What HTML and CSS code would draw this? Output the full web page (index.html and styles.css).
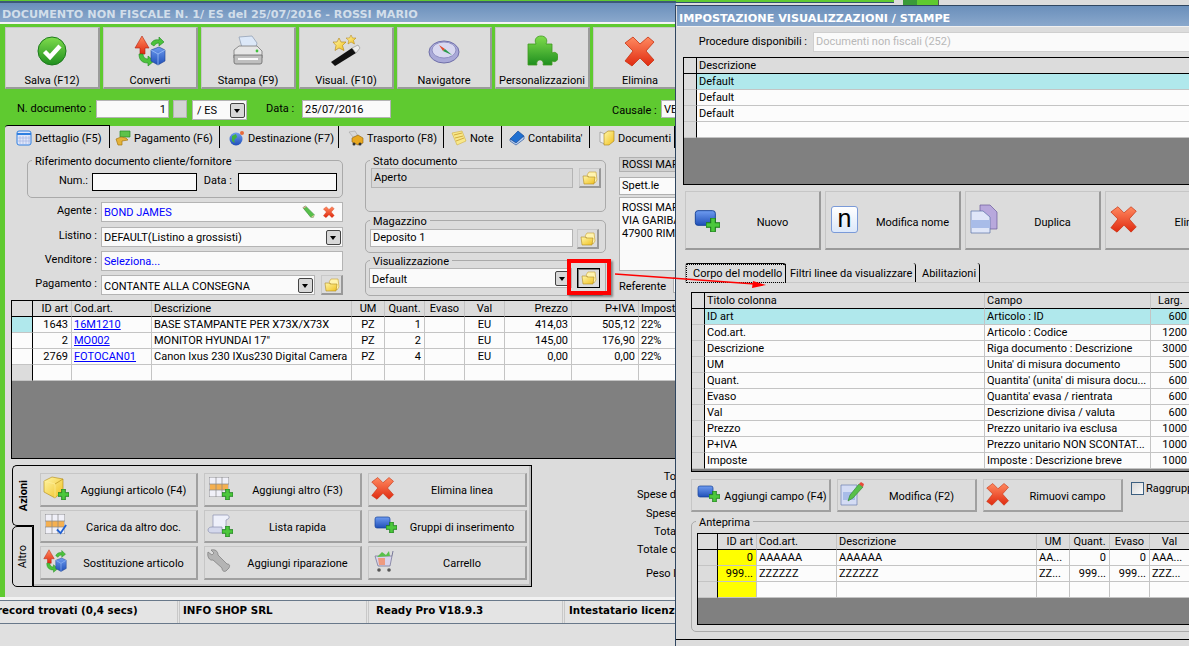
FILE: index.html
```html
<!DOCTYPE html>
<html lang="it">
<head>
<meta charset="utf-8">
<title>Documento non fiscale</title>
<link rel="stylesheet" href="styles.css">
</head>
<body>
<svg class="sprite" aria-hidden="true">
  <defs>
    <linearGradient id="gGreen" x1="0" y1="0" x2="0" y2="1"><stop offset="0" stop-color="#7fdc4c"/><stop offset="1" stop-color="#1f8f1f"/></linearGradient>
    <linearGradient id="gGold" x1="0" y1="0" x2="1" y2="1"><stop offset="0" stop-color="#fff6a8"/><stop offset="1" stop-color="#f0c020"/></linearGradient>
    <linearGradient id="gBlue" x1="0" y1="0" x2="0" y2="1"><stop offset="0" stop-color="#6f9cf0"/><stop offset="1" stop-color="#1f4fb8"/></linearGradient>
    <linearGradient id="gRed" x1="0" y1="0" x2="0" y2="1"><stop offset="0" stop-color="#ff8a60"/><stop offset="1" stop-color="#e02a10"/></linearGradient>
    <symbol id="i-check" viewBox="0 0 32 32"><circle cx="16" cy="16" r="14" fill="url(#gGreen)" stroke="#1c7a1c"/><path d="M8.500 16.500l5.500 5.500 10-11" fill="none" stroke="#fff" stroke-width="4.400"/></symbol>
    <symbol id="i-convert" viewBox="0 0 32 32"><path d="M8 1l7 12h-4v6H6v-6H1z" fill="url(#gRed)" stroke="#b02010" stroke-width=".6"/><path d="M5 19c0 6 3 9 9 9v3l6-5-6-5v3c-3 0-5-2-5-5z" fill="#4cc23c" stroke="#1c8a1c" stroke-width=".6"/><path d="M17 9c1-3 4-5 8-4V2l5 5-5 4V8c-2 0-4 1-5 3z" fill="#4cc23c" stroke="#1c8a1c" stroke-width=".6"/><path d="M17 15l8-3 6 3v11l-7 4-7-4z" fill="url(#gBlue)" stroke="#1c3f90" stroke-width=".6"/><path d="M17 15l7 4 7-4M24 19v11" fill="none" stroke="#9cc0f8" stroke-width=".8"/></symbol>
    <symbol id="i-print" viewBox="0 0 32 32"><path d="M7 2l13-1 5 7-2 8H11z" fill="#dce8f8" stroke="#8a9ab0" stroke-width=".7"/><path d="M2 15l5-4h18l5 5v7H2z" fill="#e6e6e6" stroke="#777" stroke-width=".8"/><path d="M2 20h28v7a2 2 0 0 1-2 2H4a2 2 0 0 1-2-2z" fill="#bfbfbf" stroke="#666" stroke-width=".8"/><path d="M6 23h20v2H6z" fill="#fafafa"/><circle cx="25" cy="16" r="1.400" fill="#41c23c"/></symbol>
    <symbol id="i-wand" viewBox="0 0 32 32"><path d="M1 27L22 13l4 5L5 31z" fill="#111"/><path d="M22 13l6-3 2 3-4 5z" fill="#ececec" stroke="#888" stroke-width=".6"/><path d="M9 3l2 4 5 0-3.500 3.500 1.500 5-5-2.500-4 2.500 1-5L3 7h4z" fill="url(#gGold)" stroke="#b08010" stroke-width=".6"/><path d="M21 0l1.500 3 3.500 0-2.500 2.500 1 3.500-3.500-2-3 2 .8-3.500L16 3h3.500z" fill="url(#gGold)" stroke="#b08010" stroke-width=".5"/></symbol>
    <symbol id="i-compass" viewBox="0 0 32 32"><ellipse cx="16" cy="17" rx="15" ry="11" fill="#a9a9d8" stroke="#6f6fa8"/><ellipse cx="16" cy="15" rx="12" ry="8" fill="#d8d8f0" stroke="#8080b8" stroke-width=".8"/><path d="M11 10l6 4-2 2z" fill="#e24a2a"/><path d="M15 16l2-2 7 6z" fill="#2a9a4a"/></symbol>
    <symbol id="i-puzzle" viewBox="0 0 32 32"><path d="M2 9h8c-2-4 0-8 5-8s7 4 5 8h6v9c4-2 6 1 6 4s-2 6-6 4v4H17c1-3-1-5-3-5s-4 2-3 5H2z" fill="url(#gGreen)" stroke="#3f9a20" stroke-width=".8"/></symbol>
    <symbol id="i-x" viewBox="0 0 32 32"><path d="M9 2l7 7 8-7 6 5-8 9 8 9-6 6-8-8-8 8-7-5 8-10-8-8z" fill="url(#gRed)" stroke="#c8300f" stroke-width=".8" stroke-linejoin="round"/></symbol>
    <symbol id="i-cal" viewBox="0 0 16 16"><rect x="1" y="1" width="14" height="14" rx="2" fill="#dfe6fa" stroke="#2f7fe0"/><path d="M1 4h14" stroke="#2f7fe0" stroke-width="2"/><path d="M4 6v8M7 6v8M10 6v8M13 6v8M2 8h12M2 11h12" stroke="#a8b4e0" stroke-width=".7"/></symbol>
    <symbol id="i-money" viewBox="0 0 16 16"><path d="M5 1h10v6H5z" fill="#5fc24a" stroke="#2a8a2a" stroke-width=".7"/><path d="M1 9l5-2 5 1 2 2-6 1 0 4H3z" fill="#e4b23a" stroke="#a87810" stroke-width=".7"/></symbol>
    <symbol id="i-globe" viewBox="0 0 16 16"><circle cx="7" cy="9" r="6.500" fill="url(#gBlue)"/><path d="M3 6l4-2 1 3-3 3 1 3-3-2z" fill="#3fb23f"/><circle cx="13" cy="3" r="2" fill="#e86a3a"/></symbol>
    <symbol id="i-truck" viewBox="0 0 16 16"><path d="M1 2l6-1 3 5-5 1z" fill="#d8d8d8" stroke="#999" stroke-width=".5"/><path d="M4 8l6-3 5 3v5l-5 2-6-3z" fill="#e8a820" stroke="#8a6010" stroke-width=".6"/><circle cx="6" cy="14" r="1.500" fill="#333"/><circle cx="12" cy="14" r="1.500" fill="#333"/></symbol>
    <symbol id="i-note" viewBox="0 0 16 16"><path d="M1 3l10-2 4 10-9 4z" fill="#f8e88a" stroke="#d0b040" stroke-width=".6"/><path d="M3 5l8-2M4 8l8-2M5 11l8-3" stroke="#c89a30" stroke-width=".8"/></symbol>
    <symbol id="i-book" viewBox="0 0 16 16"><path d="M1 9l8-8 6 5-8 7z" fill="#1f6fd0" stroke="#0f3f90" stroke-width=".6"/><path d="M1 9l6 4 8-7v3l-8 6-6-4z" fill="#bcd4f4" stroke="#0f3f90" stroke-width=".6"/></symbol>
    <symbol id="i-docs" viewBox="0 0 16 16"><path d="M1 2l5 2v10l-5-2z" fill="#f0f0f0" stroke="#888" stroke-width=".6"/><path d="M5 4l4-3h6v10l-5 4H5z" fill="url(#gGold)" stroke="#a88010" stroke-width=".6"/></symbol>
    <symbol id="i-folder" viewBox="0 0 16 16"><path d="M5 5l2-3h7l1 8-2 3z" fill="#fff4b0" stroke="#c8a030" stroke-width=".6"/><path d="M1 6h4l1 1h7l-1 7H2z" fill="url(#gGold)" stroke="#b08a20" stroke-width=".6"/></symbol>
    <symbol id="i-pencil" viewBox="0 0 16 16"><path d="M1 3l3-2 10 10-1 3-3 0z" fill="#58c04a" stroke="#2a8030" stroke-width=".6"/><path d="M10 14l3 0 1-3z" fill="#e8c8a0"/><path d="M1 3l3-2 1 1-3 2z" fill="#f0a0a0"/></symbol>
    <symbol id="i-cube" viewBox="0 0 24 24"><path d="M1 5l8-4 11 2v12l-8 7-11-6z" fill="url(#gGold)" stroke="#b08810" stroke-width=".6"/><path d="M1 5l11 3v14" fill="none" stroke="#fff0a0" stroke-width=".6"/><path d="M12 8l8-5" stroke="#b08810" stroke-width=".6"/></symbol>
    <symbol id="i-plus" viewBox="0 0 12 12"><path d="M4 0h4v4h4v4H8v4H4V8H0V4h4z" fill="#4cc83c" stroke="#1a7a1a" stroke-width=".9"/></symbol>
    <symbol id="i-table" viewBox="0 0 20 20"><rect x="0" y="0" width="20" height="20" fill="#f0f0f8" stroke="#777" stroke-width=".8"/><rect x="1" y="7" width="18" height="6" fill="#f5b050"/><path d="M7 0v20M13 0v20M0 7h20M0 13h20" stroke="#888" stroke-width=".7"/></symbol>
    <symbol id="i-scroll" viewBox="0 0 24 24"><path d="M6 2h14c2 0 3 3 1 4l-2 1v10H6z" fill="#eef0fa" stroke="#8a90b0" stroke-width=".7"/><path d="M1 17c0-2 2-3 4-3h10v6H5c-2 0-4-1-4-3z" fill="#d4d8ec" stroke="#8a90b0" stroke-width=".7"/></symbol>
    <symbol id="i-wrench" viewBox="0 0 24 24"><path d="M1 3l4 3 2-2-3-3c4-1 7 1 7 5l9 9c3 0 3 2 2 4l-3 3c-2 1-4 0-4-3l-9-8C2 12 0 7 1 3z" fill="#b4b4b4" stroke="#7a7a7a" stroke-width=".7"/></symbol>
    <symbol id="i-group" viewBox="0 0 24 24"><rect x="1" y="2" width="15" height="11" rx="2" fill="url(#gBlue)" stroke="#123f98" stroke-width=".7"/></symbol>
    <symbol id="i-cart" viewBox="0 0 24 24"><path d="M4 7h17l-2 10H7z" fill="#d8d4ec" stroke="#7a7a9a" stroke-width=".8"/><path d="M6 8l5-5 4 3 3-4 1 5z" fill="#58c04a"/><path d="M7 9h7v7H8z" fill="#ee9a80"/><path d="M21 7l1-5" stroke="#7a7a9a"/><circle cx="8" cy="21" r="1.800" fill="#555"/><circle cx="18" cy="21" r="1.800" fill="#555"/></symbol>
    <symbol id="i-dup" viewBox="0 0 28 30"><path d="M10 1h10l7 7v17H10z" fill="#b8a8dc" stroke="#6a5a9a" stroke-width=".7"/><path d="M1 7h12l7 6v16H1z" fill="#dfe6f8" stroke="#5a70a8" stroke-width=".7"/><path d="M1 16h19v8H1z" fill="#a8bce8"/></symbol>
    <symbol id="i-edit" viewBox="0 0 24 24"><path d="M1 3h16v20H1z" fill="#d4dcf4" stroke="#6a80b0" stroke-width=".7"/><path d="M3 10h12v8H3z" fill="#a8bce8"/><path d="M8 19l2-6L19 2l4 3-10 11z" fill="#58c04a" stroke="#2a8030" stroke-width=".6"/><path d="M19 2l4 3 1-3-3-2z" fill="#e84a3a"/></symbol>
  </defs>
</svg>

<div class="desk">
  <div class="left">
    <div class="topline"></div>
    <div class="wtitle wtitle-left">DOCUMENTO NON FISCALE N. 1/ ES del 25/07/2016 - ROSSI MARIO</div>
    <div class="green">
      <div class="toolbar">
        <div class="tbtn"><svg class="i32"><use href="#i-check"/></svg><span>Salva (F12)</span></div>
        <div class="tbtn"><svg class="i32"><use href="#i-convert"/></svg><span>Converti</span></div>
        <div class="tbtn"><svg class="i32"><use href="#i-print"/></svg><span>Stampa (F9)</span></div>
        <div class="tbtn"><svg class="i32"><use href="#i-wand"/></svg><span>Visual. (F10)</span></div>
        <div class="tbtn"><svg class="i32"><use href="#i-compass"/></svg><span>Navigatore</span></div>
        <div class="tbtn"><svg class="i32"><use href="#i-puzzle"/></svg><span>Personalizzazioni</span></div>
        <div class="tbtn"><svg class="i32"><use href="#i-x"/></svg><span>Elimina</span></div>
      </div>
      <div class="docrow">
        <span class="dl dl-num">N. documento :</span>
        <span class="field f-num">1</span>
        <span class="sqbtn"></span>
        <span class="field f-es">/ ES<span class="arrow"></span></span>
        <span class="dl dl-data">Data :</span>
        <span class="field f-data">25/07/2016</span>
        <span class="dl dl-caus">Causale :</span>
        <span class="field f-caus">VE</span>
      </div>
      <div class="tabs">
        <div class="tab tab-on t1"><svg class="i16"><use href="#i-cal"/></svg>Dettaglio (F5)</div>
        <div class="tab t2"><svg class="i16"><use href="#i-money"/></svg>Pagamento (F6)</div>
        <div class="tab t3"><svg class="i16"><use href="#i-globe"/></svg>Destinazione (F7)</div>
        <div class="tab t4"><svg class="i16"><use href="#i-truck"/></svg>Trasporto (F8)</div>
        <div class="tab t5"><svg class="i16"><use href="#i-note"/></svg>Note</div>
        <div class="tab t6"><svg class="i16"><use href="#i-book"/></svg>Contabilita'</div>
        <div class="tab t7"><svg class="i16"><use href="#i-docs"/></svg>Documenti</div>
      </div>
      <div class="page">
        <div class="form">
          <div class="col-a">
            <div class="group g-ref">
              <div class="legend">Riferimento documento cliente/fornitore</div>
              <div class="refrow">
                <span class="rl rl-num">Num.:</span><span class="blackinput bi-num"></span>
                <span class="rl rl-data">Data :</span><span class="blackinput bi-data"></span>
              </div>
            </div>
            <div class="frow fr-agente"><span class="fl">Agente :</span><span class="field wide blue">BOND JAMES<svg class="i14 ed"><use href="#i-pencil"/></svg><svg class="i12 del"><use href="#i-x"/></svg></span></div>
            <div class="frow fr-listino"><span class="fl">Listino :</span><span class="field wide">DEFAULT(Listino a grossisti)<span class="arrow"></span></span></div>
            <div class="frow fr-vend"><span class="fl">Venditore :</span><span class="field wide blue">Seleziona...</span></div>
            <div class="frow fr-pag"><span class="fl">Pagamento :</span><span class="field narrow">CONTANTE ALLA CONSEGNA<span class="arrow"></span></span><span class="fbtn"><svg class="i16"><use href="#i-folder"/></svg></span></div>
          </div>
          <div class="col-b">
            <div class="group g-stato">
              <div class="legend">Stato documento</div>
              <div class="grow gr-stato"><span class="field grey fs">Aperto</span><span class="fbtn"><svg class="i16"><use href="#i-folder"/></svg></span></div>
            </div>
            <div class="group g-mag">
              <div class="legend">Magazzino</div>
              <div class="grow gr-mag"><span class="field fm">Deposito 1</span><span class="fbtn"><svg class="i16"><use href="#i-folder"/></svg></span></div>
            </div>
            <div class="group g-vis">
              <div class="legend">Visualizzazione</div>
              <div class="grow gr-vis"><span class="field fv">Default<span class="arrow"></span></span><span class="fbtn pressed"><svg class="i16"><use href="#i-folder"/></svg></span></div>
            </div>
          </div>
          <div class="col-c">
            <div class="cbox cb1">ROSSI MAR</div>
            <div class="cbox cb2">Spett.le</div>
            <div class="cbox cb3">ROSSI MAR<br>VIA GARIBA<br>47900 RIMI</div>
            <div class="cref"><span>Referente</span><span class="crefin"></span></div>
          </div>
        </div>

        <div class="grid docgrid">
          <table>
            <colgroup><col class="c21"><col class="c39"><col class="c80"><col class="c200"><col class="c33"><col class="c40"><col class="c40"><col class="c40"><col class="c67"><col class="c67"><col class="c67"></colgroup>
            <tr class="hd"><th class="ind"></th><th class="r">ID art</th><th>Cod.art.</th><th>Descrizione</th><th class="m">UM</th><th class="m">Quant.</th><th class="m">Evaso</th><th class="m">Val</th><th class="r">Prezzo</th><th class="r">P+IVA</th><th>Imposte</th></tr>
            <tr><td class="ind sel"></td><td class="r">1643</td><td class="lnk"><u>16M1210</u></td><td>BASE STAMPANTE PER X73X/X73X</td><td class="m">PZ</td><td class="r">1</td><td></td><td class="m">EU</td><td class="r">414,03</td><td class="r">505,12</td><td>22%</td></tr>
            <tr><td class="ind wh"></td><td class="r">2</td><td class="lnk"><u>MO002</u></td><td>MONITOR HYUNDAI 17"</td><td class="m">PZ</td><td class="r">2</td><td></td><td class="m">EU</td><td class="r">145,00</td><td class="r">176,90</td><td>22%</td></tr>
            <tr><td class="ind wh"></td><td class="r">2769</td><td class="lnk"><u>FOTOCAN01</u></td><td>Canon Ixus 230 IXus230 Digital Camera</td><td class="m">PZ</td><td class="r">4</td><td></td><td class="m">EU</td><td class="r">0,00</td><td class="r">0,00</td><td>22%</td></tr>
            <tr><td class="ind"></td><td></td><td></td><td></td><td></td><td></td><td></td><td></td><td></td><td></td><td></td></tr>
          </table>
        </div>

        <div class="lower">
          <div class="actions">
            <div class="vtabs">
              <div class="vtab von"><span>Azioni</span></div>
              <div class="vtab"><span>Altro</span></div>
            </div>
            <div class="apanel">
              <div class="abtn"><svg class="ico"><use href="#i-cube"/></svg><svg class="plus"><use href="#i-plus"/></svg><span>Aggiungi articolo (F4)</span></div>
              <div class="abtn"><svg class="ico ico-t"><use href="#i-table"/></svg><svg class="plus"><use href="#i-plus"/></svg><span>Aggiungi altro (F3)</span></div>
              <div class="abtn"><svg class="ico"><use href="#i-x"/></svg><span>Elimina linea</span></div>
              <div class="abtn"><svg class="ico ico-t"><use href="#i-table"/></svg><svg class="tick" viewBox="0 0 12 12"><path d="M1 6l4 4 6-9" fill="none" stroke="#1f5fd0" stroke-width="2"/></svg><span>Carica da altro doc.</span></div>
              <div class="abtn"><svg class="ico"><use href="#i-scroll"/></svg><svg class="plus"><use href="#i-plus"/></svg><span>Lista rapida</span></div>
              <div class="abtn"><svg class="ico ico-g"><use href="#i-group"/></svg><svg class="plus plus-g"><use href="#i-plus"/></svg><span>Gruppi di inserimento</span></div>
              <div class="abtn"><svg class="ico"><use href="#i-convert"/></svg><span>Sostituzione articolo</span></div>
              <div class="abtn"><svg class="ico"><use href="#i-wrench"/></svg><span>Aggiungi riparazione</span></div>
              <div class="abtn"><svg class="ico"><use href="#i-cart"/></svg><span>Carrello</span></div>
            </div>
          </div>
          <div class="totals">
            <div class="t-a">To</div>
            <div class="t-b">Spese d</div>
            <div class="t-c">Spese</div>
            <div class="t-d">Tota</div>
            <div class="t-e">Totale c</div>
            <div class="t-f">Peso l</div>
          </div>
        </div>
      </div>
    </div>
    <div class="status">
      <div class="sbar">
        <div class="seg s1">record trovati (0,4 secs)</div>
        <div class="seg s2">INFO SHOP SRL</div>
        <div class="seg s3">Ready Pro V18.9.3</div>
        <div class="seg s4">Intestatario licenza</div>
      </div>
    </div>
  </div>

  <div class="rstrip"><span class="rs-green"></span><span class="rs-gap"></span><span class="rs-ico"></span><span class="rs-green2"></span></div>

  <div class="rwin">
    <div class="wtitle wtitle-right">IMPOSTAZIONE VISUALIZZAZIONI / STAMPE</div>
    <div class="rbody">
      <div class="procrow"><span class="procl">Procedure disponibili :</span><span class="proc">Documenti non fiscali (252)</span></div>
      <div class="grid g1">
        <table>
          <colgroup><col class="c12"><col class="c600"></colgroup>
          <tr class="hd"><th class="ind"></th><th>Descrizione</th></tr>
          <tr class="cy"><td class="ind"></td><td>Default</td></tr>
          <tr><td class="ind"></td><td>Default</td></tr>
          <tr><td class="ind"></td><td>Default</td></tr>
          <tr><td class="ind"></td><td></td></tr>
        </table>
      </div>
      <div class="bigbtns">
        <div class="bbtn"><svg class="ib ib-g"><use href="#i-group"/></svg><svg class="plus plus-b"><use href="#i-plus"/></svg><span>Nuovo</span></div>
        <div class="bbtn"><b class="nbox">n</b><span>Modifica nome</span></div>
        <div class="bbtn"><svg class="ib"><use href="#i-dup"/></svg><span>Duplica</span></div>
        <div class="bbtn"><svg class="ib"><use href="#i-x"/></svg><span>Elimina</span></div>
      </div>
      <div class="rtabs">
        <div class="rtab rt1"><span class="focus">Corpo del modello</span></div>
        <div class="rtab rt2">Filtri linee da visualizzare</div>
        <div class="rtab rt3">Abilitazioni</div>
      </div>
      <div class="grid g2">
        <table>
          <colgroup><col class="c13"><col class="c280"><col class="c166"><col class="c40"></colgroup>
          <tr class="hd"><th class="ind"></th><th>Titolo colonna</th><th>Campo</th><th class="larg">Larg.</th></tr>
          <tr class="cy"><td class="ind"></td><td>ID art</td><td>Articolo : ID</td><td class="r">600</td></tr>
          <tr><td class="ind"></td><td>Cod.art.</td><td>Articolo : Codice</td><td class="r">1200</td></tr>
          <tr><td class="ind"></td><td>Descrizione</td><td>Riga documento : Descrizione</td><td class="r">3000</td></tr>
          <tr><td class="ind"></td><td>UM</td><td>Unita' di misura documento</td><td class="r">500</td></tr>
          <tr><td class="ind"></td><td>Quant.</td><td>Quantita' (unita' di misura docu...</td><td class="r">600</td></tr>
          <tr><td class="ind"></td><td>Evaso</td><td>Quantita' evasa / rientrata</td><td class="r">600</td></tr>
          <tr><td class="ind"></td><td>Val</td><td>Descrizione divisa / valuta</td><td class="r">600</td></tr>
          <tr><td class="ind"></td><td>Prezzo</td><td>Prezzo unitario iva esclusa</td><td class="r">1000</td></tr>
          <tr><td class="ind"></td><td>P+IVA</td><td>Prezzo unitario NON SCONTAT...</td><td class="r">1000</td></tr>
          <tr><td class="ind"></td><td>Imposte</td><td>Imposte : Descrizione breve</td><td class="r">1000</td></tr>
        </table>
      </div>
      <div class="midbtns">
        <div class="abtn mb"><svg class="ico ico-g"><use href="#i-group"/></svg><svg class="plus plus-g"><use href="#i-plus"/></svg><span>Aggiungi campo (F4)</span></div>
        <div class="abtn mb"><svg class="ico"><use href="#i-edit"/></svg><span>Modifica (F2)</span></div>
        <div class="abtn mb"><svg class="ico"><use href="#i-x"/></svg><span>Rimuovi campo</span></div>
        <div class="chk"><span class="box"></span>Raggrupp</div>
      </div>
      <div class="group g-ant">
        <div class="legend">Anteprima</div>
        <div class="grid g3">
          <table>
            <colgroup><col class="c20"><col class="c39"><col class="c80"><col class="c200"><col class="c33"><col class="c40"><col class="c40"><col class="c40"></colgroup>
            <tr class="hd"><th class="ind"></th><th class="r">ID art</th><th>Cod.art.</th><th>Descrizione</th><th class="m">UM</th><th class="m">Quant.</th><th class="m">Evaso</th><th class="m">Val</th></tr>
            <tr><td class="ind"></td><td class="r yel">0</td><td>AAAAAA</td><td>AAAAAA</td><td>AA...</td><td class="r">0</td><td class="r">0</td><td>AAA...</td></tr>
            <tr><td class="ind"></td><td class="r yel">999...</td><td>ZZZZZZ</td><td>ZZZZZZ</td><td>ZZ...</td><td class="r">999...</td><td class="r">999...</td><td>ZZZ...</td></tr>
            <tr><td class="ind"></td><td class="yel"></td><td></td><td></td><td></td><td></td><td></td><td></td></tr>
          </table>
        </div>
      </div>
    </div>
  </div>

  <div class="redbox"></div>
  <svg class="redarrow" viewBox="0 0 152 16"><path d="M0 1l140 10" stroke="#f00" stroke-width="1.300"/><path d="M138 8l13 4-14 3z" fill="#f00"/></svg>
</div>
</body>
</html>
```

FILE: styles.css
```css
* { box-sizing: border-box; }
html, body { margin: 0; padding: 0; }
body { font: 11px/13px Roboto, "Liberation Sans", Arial, sans-serif; color: #000; background: #dcdcdc; }
.sprite { position: absolute; width: 0; height: 0; }
.desk { position: relative; width: 1189px; height: 646px; overflow: hidden; background: #dcdcdc; }

/* left window */
.left { width: 676px; height: 646px; display: flex; flex-direction: column; overflow: hidden; }
.topline { height: 3px; flex: none; background: linear-gradient(#5fca30 0 1px, #3c5a78 1px); }
.wtitle { font: bold 11.2px/19px "DejaVu Sans", sans-serif; background: linear-gradient(#6a8fbb, #8aa8cc); white-space: nowrap; overflow: hidden; }
.wtitle-left { height: 21px; padding: 3px 0 0 2px; line-height: 18px; color: #d2deea; border-bottom: 2px solid #f4f4f4; flex: none; }
.green { height: 573px; flex: none; background: #5fca30; padding: 3px 0 0 5px; display: flex; flex-direction: column; }

.toolbar { display: flex; gap: 3px; height: 62px; flex: none; }
.tbtn { flex: 0 0 95px; background: #dcdcdc; border: 1px solid #c6c6c6; border-right: 2px solid #9a9a9a; border-bottom: 2px solid #9a9a9a; display: flex; flex-direction: column; align-items: center; }
.tbtn span { margin-top: 7px; white-space: nowrap; }
.i32 { width: 32px; height: 32px; margin-top: 7px; }
.i16 { width: 16px; height: 16px; flex: none; }
.i14 { width: 14px; height: 14px; }
.i12 { width: 12px; height: 12px; }

.docrow { display: flex; align-items: flex-start; height: 20px; margin-top: 11px; flex: none; }
.docrow > * { flex: none; }
.dl { line-height: 18px; white-space: nowrap; }
.dl-num { margin: 0 5px 0 12px; width: 74px; }
.dl-data { margin: 0 6px 0 19px; width: 30px; }
.dl-caus { margin: 2px 6px 0 221px; width: 43px; }
.field { display: flex; align-items: center; background: #fafafa; border: 1px solid #b4b4b4; padding: 0 2px; white-space: nowrap; position: relative; }
.f-num { width: 73px; height: 18px; justify-content: flex-end; }
.sqbtn { width: 14px; height: 18px; margin: 0 5px 0 4px; background: #d4d4d4; border: 1px solid #b4b4b4; }
.f-es { width: 55px; height: 20px; padding-left: 4px; }
.f-data { width: 89px; height: 18px; }
.f-caus { width: 60px; height: 18px; }
.arrow { position: absolute; right: 1px; top: 50%; width: 15px; height: 15px; margin-top: -7.5px; background: #d8d8d8; border: 1px solid #444; border-radius: 2px; }
.arrow::after { content: ""; position: absolute; left: 3px; top: 5px; border: 3px solid transparent; border-top: 4px solid #000; border-bottom: 0; }

.tabs { display: flex; height: 23px; margin-top: 5px; flex: none; }
.tab { flex: none; display: flex; align-items: center; gap: 3px; background: #dcdcdc; border-right: 1px solid #000; padding: 2px 0 0 7px; margin-top: 1px; white-space: nowrap; }
.tab-on { margin-top: 0; border-top: 1px solid #000; border-radius: 3px 0 0 0; padding-left: 11px; }
.t1 { width: 105px; }
.t2 { width: 110px; padding-left: 5px; }
.t3 { width: 119px; padding-left: 9px; }
.t4 { width: 105px; padding-left: 9px; }
.t5 { width: 58px; padding-left: 7px; }
.t6 { width: 88px; padding-left: 7px; }
.t7 { width: 85px; padding-left: 9px; }

.page { flex: 1; background: #dcdcdc; display: flex; flex-direction: column; min-height: 0; }
.form { display: flex; height: 152px; flex: none; }
.col-a { flex: 0 0 338px; margin-top: 12px; }
.col-b { flex: 0 0 241px; margin: 12px 0 0 22px; }
.col-c { flex: 0 0 70px; margin: 9px 0 0 13px; }

.group { border: 1px solid #aaa; border-radius: 5px; }
.legend { width: fit-content; height: 13px; margin: -6px 0 0 4px; padding: 0 3px; background: #dcdcdc; white-space: nowrap; }
.g-ref { height: 38px; margin-left: 22px; width: 316px; }
.refrow { display: flex; margin-top: 5px; }
.rl { line-height: 16px; text-align: right; }
.rl-num { width: 60px; margin-right: 4px; }
.rl-data { width: 35px; margin: 0 6px 0 0; }
.blackinput { height: 18px; background: #fafafa; border: 1px solid #000; }
.bi-num { width: 105px; }
.bi-data { width: 99px; }
.frow { display: flex; padding-left: 23px; }
.fl { width: 69px; margin-right: 4px; text-align: right; line-height: 18px; flex: none; white-space: nowrap; }
.fr-agente { margin-top: 4px; }
.fr-listino { margin-top: 5px; }
.fr-vend { margin-top: 4px; }
.fr-pag { margin-top: 4px; }
.wide { width: 242px; height: 20px; }
.narrow { width: 214px; height: 20px; margin-right: 6px; padding-top: 2px; }
.blue { color: #00f; }
.ed { position: absolute; right: 26px; top: 2px; }
.del { position: absolute; right: 7px; top: 3px; }
.fbtn { width: 22px; height: 20px; background: #dcdcdc; border: 1px solid #c8c8c8; border-right: 2px solid #999; border-bottom: 2px solid #999; display: flex; align-items: center; justify-content: center; flex: none; }
.pressed { width: 23px; border: 1px solid #000; box-shadow: inset 1px 1px #777; }

.g-stato { height: 52px; }
.g-mag { height: 33px; margin-top: 8px; }
.g-vis { height: 36px; margin-top: 7px; }
.grow { display: flex; }
.gr-stato { margin: 0 0 0 5px; gap: 6px; }
.gr-mag { margin: 1px 0 0 4px; gap: 4px; }
.gr-vis { margin: 0 0 0 3px; gap: 5px; }
.grey { background: #d8d8d8; }
.fs { width: 202px; height: 20px; align-items: flex-start; padding-top: 2px; }
.fm { width: 203px; height: 18px; padding-bottom: 2px; }
.fv { width: 203px; height: 20px; padding-top: 2px; }

.cbox { border: 1px solid #b0b0b0; background: #fafafa; padding-left: 2px; white-space: nowrap; overflow: hidden; }
.cb1 { height: 15px; background: #d0d0d0; }
.cb2 { height: 18px; margin-top: 5px; line-height: 16px; }
.cb3 { height: 74px; margin-top: 2px; padding-top: 3px; }
.cref { margin-top: 9px; display: flex; justify-content: space-between; }
.crefin { width: 16px; height: 16px; margin: -3px 0 0 0; background: #fafafa; border: 1px solid #b0b0b0; }

.grid { border: 1px solid #000; background: #808080; overflow: hidden; flex: none; }
.grid table { border-collapse: separate; border-spacing: 0; table-layout: fixed; width: max-content; }
.grid th, .grid td { height: 16px; padding: 1px 2px 0; font-weight: normal; text-align: left; border-bottom: 1px solid #c4c4c4; border-right: 1px solid #c4c4c4; background: #fcfcfc; white-space: nowrap; overflow: hidden; line-height: 14px; }
.grid th { background: #dcdcdc; border-bottom-color: #000; }
.grid .ind { background: #dcdcdc; border-right-color: #000; padding: 0; }
.grid .sel { background: #b0e8ec; }
.grid .wh { background: #fcfcfc; }
.grid .cy td:not(.ind) { background: #b0e8ec; }
.grid .r { text-align: right; padding-right: 3px; }
.grid .m { text-align: center; }
.grid .lnk { color: #00f; }
.grid .yel { background: #ffff00; }
.grid .larg { padding-left: 7px; }
.c12 { width: 13px; }
.c13 { width: 13px; }
.c20 { width: 20px; }
.c21 { width: 21px; }
.c33 { width: 33px; }
.c39 { width: 39px; }
.c40 { width: 40px; }
.c67 { width: 67px; }
.c80 { width: 80px; }
.c166 { width: 166px; }
.c200 { width: 200px; }
.c280 { width: 280px; }
.c600 { width: 600px; }

.docgrid { height: 159px; margin-left: 6px; }

.lower { display: flex; margin: 6px 0 0 7px; flex: none; }
.actions { display: flex; flex: 0 0 520px; height: 122px; }
.vtabs { width: 21px; display: flex; flex-direction: column; flex: none; }
.vtab { flex: 1; border: 1px solid #000; border-radius: 5px 0 0 5px; display: flex; align-items: center; justify-content: center; }
.vtab span { writing-mode: vertical-rl; transform: rotate(180deg); }
.von { flex: 0 0 61px; border-right: 0; font-weight: bold; position: relative; z-index: 1; margin-right: -1px; background: #dcdcdc; }
.apanel { flex: 1; border: 1px solid #000; box-shadow: inset -2px -2px #bdbdbd; padding: 7px 0 0 6px; display: grid; grid-template-columns: 158px 158px 159px; grid-auto-rows: 33.5px; column-gap: 6px; row-gap: 3px; }
.abtn { position: relative; display: flex; align-items: center; background: #dcdcdc; border: 1px solid #c6c6c6; border-right: 2px solid #a0a0a0; border-bottom: 2px solid #a0a0a0; padding-left: 30px; white-space: nowrap; }
.abtn span { flex: 1; text-align: center; padding-top: 3px; }
.ico { position: absolute; left: 2px; top: 2px; width: 24px; height: 24px; }
.ico-t { width: 20px; height: 20px; left: 4px; top: 3px; }
.ico-g { width: 24px; height: 24px; left: 5px; top: 4px; }
.plus { position: absolute; left: 17px; top: 15px; width: 11px; height: 11px; }
.plus-g { left: 17px; top: 11px; }
.tick { position: absolute; left: 15px; top: 13px; width: 11px; height: 11px; }

.totals { flex: 0 0 144px; margin-top: 5px; text-align: right; overflow: hidden; white-space: nowrap; }
.t-a { height: 18px; }
.t-b { height: 19px; }
.t-c { height: 18px; }
.t-d { height: 18px; }
.t-e { height: 24px; }
.t-f { height: 14px; }

.status { flex: 1; background: #e0e0e0; border-top: 3px solid #f2f2f2; }
.sbar { display: flex; height: 24px; border-top: 1px solid #68788a; border-bottom: 1px solid #68788a; background: #e4e4e4; font: bold 10.3px/18px "DejaVu Sans", sans-serif; white-space: nowrap; }
.seg { border-right: 3px double #c8c8c8; overflow: hidden; flex: none; }
.s1 { width: 180px; text-indent: -3px; }
.s2 { width: 189px; padding-left: 3px; }
.s3 { width: 196px; padding-left: 7px; }
.s4 { width: 111px; padding-left: 4px; border: 0; }

/* right window */
.rstrip { position: absolute; left: 676px; top: 0; width: 270px; height: 5px; display: flex; background: #dcdcdc; }
.rs-green { width: 218px; background: linear-gradient(#5fca30 0 2px, #2f4f70 2px 3px, #dcdcdc 3px); }
.rs-gap { width: 9px; }
.rs-ico { width: 14px; background: #3a9a3a; }
.rs-green2 { width: 22px; background: #5fca30; border-right: 1px solid #555; }
.rwin { position: absolute; left: 675px; top: 5px; width: 514px; height: 641px; background: #dcdcdc; border-top: 1px solid #2f4660; border-left: 1px solid #2f4660; display: flex; flex-direction: column; overflow: hidden; }
.wtitle-right { height: 21px; padding: 3px 0 0 2px; line-height: 20px; color: #fff; border-bottom: 1px solid #f0f0f0; flex: none; margin-left: 1px; }
.rbody { padding: 5px 0 0 7px; height: 613px; flex: none; border-bottom: 1px solid #000; overflow: hidden; width: 600px; }
.procrow { display: flex; height: 20px; }
.procl { width: 124px; text-align: right; line-height: 20px; }
.proc { margin-left: 6px; width: 440px; background: #fafafa; border: 1px solid #cfcfcf; color: #b8b8b8; padding-left: 2px; line-height: 18px; }
.g1 { height: 128px; margin-top: 5px; width: 540px; }
.bigbtns { display: flex; gap: 4px; margin: 6px 0 0 2px; height: 59px; }
.bbtn { position: relative; flex: 0 0 136px; display: flex; align-items: center; background: #dcdcdc; border: 1px solid #c6c6c6; border-right: 2px solid #9a9a9a; border-bottom: 2px solid #9a9a9a; padding-left: 40px; }
.bbtn span { flex: 1; text-align: center; padding-top: 5px; }
.ib { position: absolute; left: 4px; top: 12px; width: 28px; height: 30px; }
.ib-g { left: 8px; top: 16px; width: 32px; height: 32px; }
.plus-b { left: 20px; top: 26px; width: 14px; height: 14px; }
.nbox { position: absolute; left: 5px; top: 14px; width: 27px; height: 27px; background: linear-gradient(#fff, #dce8fa); border: 1px solid #7a9ad8; border-radius: 3px; font: 25px/23px "Liberation Sans", sans-serif; text-align: center; }
.rtabs { display: flex; margin: 13px 0 0 2px; height: 20px; border-bottom: 1px solid #c8c8c8; width: 520px; }
.rtab { height: 19px; line-height: 21px; border-right: 1px solid #000; border-radius: 0 3px 0 0; padding-left: 4px; white-space: nowrap; }
.rt1 { width: 101px; padding: 1px 0 0 1px; border-top: 1px solid #000; border-left: 1px solid #999; border-radius: 3px 3px 0 0; }
.focus { display: block; height: 17px; line-height: 18px; padding-left: 6px; outline: 1px dotted #000; }
.rt2 { width: 130px; }
.rt3 { width: 64px; padding-left: 6px; }
.g2 { height: 180px; margin: 9px 0 0 8px; width: 530px; }
.midbtns { display: flex; gap: 6px; margin: 7px 0 0 8px; height: 33px; width: 530px; }
.mb { flex: 0 0 140px; }
.chk { display: flex; gap: 2px; margin: 3px 0 0 2px; white-space: nowrap; }
.box { width: 13px; height: 13px; background: linear-gradient(135deg, #d8d8d8, #fafafa); border: 1px solid #3c5f80; }
.g-ant { height: 111px; margin: 9px 0 0 8px; width: 530px; }
.g3 { height: 92px; margin: 4px 0 0 5px; width: 520px; }

/* overlays */
.redbox { position: absolute; left: 567px; top: 259px; width: 44px; height: 36px; border: 4px solid #f00; box-shadow: 2px 2px 2px rgba(0,0,0,.4); }
.redarrow { position: absolute; left: 615px; top: 273px; width: 152px; height: 16px; }
```
